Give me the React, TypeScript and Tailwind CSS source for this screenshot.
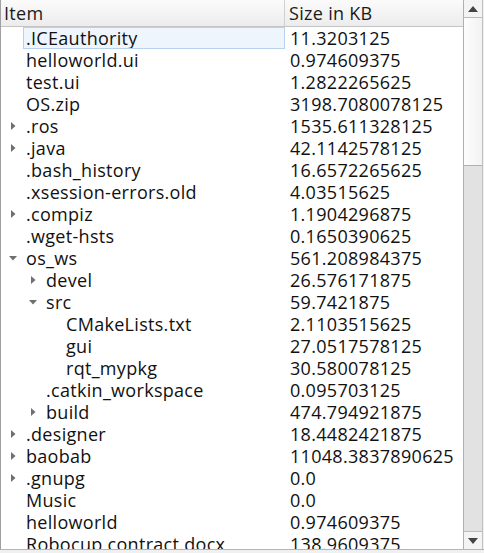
import React from "react";

type Row = { name: string; size: string; depth: number; arrow?: "right" | "down"; selected?: boolean };

const rows: Row[] = [
  { name: ".ICEauthority", size: "11.3203125", depth: 0, selected: true },
  { name: "helloworld.ui", size: "0.974609375", depth: 0 },
  { name: "test.ui", size: "1.2822265625", depth: 0 },
  { name: "OS.zip", size: "3198.7080078125", depth: 0 },
  { name: ".ros", size: "1535.611328125", depth: 0, arrow: "right" },
  { name: ".java", size: "42.1142578125", depth: 0, arrow: "right" },
  { name: ".bash_history", size: "16.6572265625", depth: 0 },
  { name: ".xsession-errors.old", size: "4.03515625", depth: 0 },
  { name: ".compiz", size: "1.1904296875", depth: 0, arrow: "right" },
  { name: ".wget-hsts", size: "0.1650390625", depth: 0 },
  { name: "os_ws", size: "561.208984375", depth: 0, arrow: "down" },
  { name: "devel", size: "26.576171875", depth: 1, arrow: "right" },
  { name: "src", size: "59.7421875", depth: 1, arrow: "down" },
  { name: "CMakeLists.txt", size: "2.1103515625", depth: 2 },
  { name: "gui", size: "27.0517578125", depth: 2 },
  { name: "rqt_mypkg", size: "30.580078125", depth: 2 },
  { name: ".catkin_workspace", size: "0.095703125", depth: 1 },
  { name: "build", size: "474.794921875", depth: 1, arrow: "right" },
  { name: ".designer", size: "18.4482421875", depth: 0, arrow: "right" },
  { name: "baobab", size: "11048.3837890625", depth: 0, arrow: "right" },
  { name: ".gnupg", size: "0.0", depth: 0, arrow: "right" },
  { name: "Music", size: "0.0", depth: 0 },
  { name: "helloworld", size: "0.974609375", depth: 0 },
  { name: "Robocup contract.docx", size: "138.9609375", depth: 0 },
];

const indentClass = ["w-[0px]", "w-[20px]", "w-[40px]"];

function Arrow({ dir }: { dir?: "right" | "down" }) {
  if (!dir) return null;
  if (dir === "right")
    return (
      <svg width="20" height="22" viewBox="0 0 20 22">
        <path d="M8 7 L12.5 11 L8 15 Z" fill="#6f6f6f" />
      </svg>
    );
  return (
    <svg width="20" height="22" viewBox="0 0 20 22">
      <path d="M6 9 L14 9 L10 13.5 Z" fill="#6f6f6f" />
    </svg>
  );
}

export default function App() {
  return (
    <div
      className="w-[484px] h-[553px] bg-[#f0f0f0] overflow-hidden flex flex-col"
      style={{ fontFamily: '"Open Sans", "Noto Sans", sans-serif' }}
    >
      <div className="h-[550px] flex border-b border-[#b5b5b5] border-l border-l-[#a0a0a0] bg-white">
        <div className="flex-1 flex flex-col overflow-hidden">
          {/* header */}
          <div className="h-[27px] shrink-0 flex border-b border-[#c4c4c4] bg-gradient-to-b from-[#fbfbfb] to-[#ececec] text-[18px] tracking-[0.3px] text-[#1a1a1a] leading-none">
            <div className="w-[284px] border-r border-[#d0d0d0] pl-[3px] flex items-center">Item</div>
            <div className="flex-1 pl-[4px] flex items-center">Size in KB</div>
          </div>
          {/* rows */}
          <div className="flex-1 overflow-hidden text-[18px] tracking-[0.3px] text-[#111111] leading-none">
            {rows.map((r, i) => (
              <div key={i} className="h-[22px] flex items-center">
                <div className="w-[284px] flex items-center pl-[2px] h-full">
                  <div className={indentClass[r.depth] + " shrink-0"} />
                  <div className="w-[20px] h-[22px] shrink-0">
                    <Arrow dir={r.arrow} />
                  </div>
                  <div
                    className={
                      "flex-1 h-full flex items-center whitespace-nowrap overflow-hidden " +
                      (r.selected ? "border border-[#b6d2ee] bg-[#eef5fc] pl-[2px]" : "pl-[3px]")
                    }
                  >
                    {r.name}
                  </div>
                </div>
                <div className="flex-1 pl-[5px] whitespace-nowrap">{r.size}</div>
              </div>
            ))}
          </div>
        </div>
        {/* scrollbar */}
        <div className="w-[20px] shrink-0 flex flex-col border-l border-[#b0b0b0] border-r border-r-[#c0c0c0] bg-[#e2e2e2]">
          <div className="h-[18px] shrink-0 bg-[#f4f4f4] border-b border-[#bcbcbc] flex items-center justify-center">
            <svg width="10" height="6" viewBox="0 0 10 6">
              <path d="M0 6 L5 0 L10 6 Z" fill="#444" />
            </svg>
          </div>
          <div className="h-[148px] shrink-0 bg-gradient-to-r from-[#fdfdfd] to-[#f2f2f2] border-b border-[#b0b0b0]" />
          <div className="flex-1" />
          <div className="h-[18px] shrink-0 bg-[#f4f4f4] border-t border-[#bcbcbc] flex items-center justify-center">
            <svg width="10" height="6" viewBox="0 0 10 6">
              <path d="M0 0 L10 0 L5 6 Z" fill="#444" />
            </svg>
          </div>
        </div>
        <div className="w-[1px] shrink-0 bg-[#f0f0f0]" />
      </div>
    </div>
  );
}
